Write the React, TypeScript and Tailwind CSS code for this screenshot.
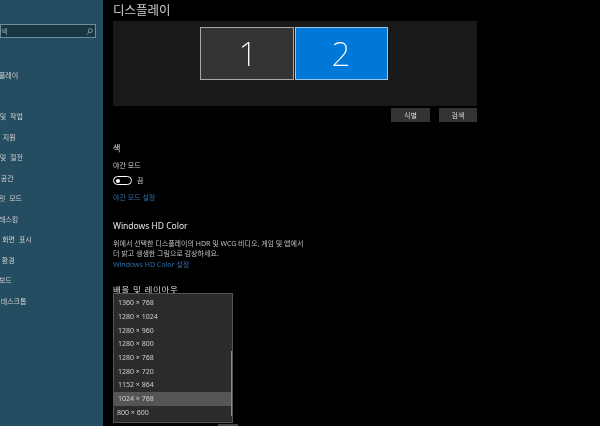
const nav = [
  { t: "디스플레이", c: "ml-[-14px] mt-[33px]" },
  { t: "알림 및 작업", c: "ml-[-17px] mt-[32px]" },
  { t: "집중 지원", c: "ml-[-14px] mt-[11.5px]" },
  { t: "전원 및 절전", c: "ml-[-17px] mt-[11.5px]" },
  { t: "저장 공간", c: "ml-[-16px] mt-[11.5px]" },
  { t: "태블릿 모드", c: "ml-[-14px] mt-[11.5px]" },
  { t: "멀티태스킹", c: "ml-[-14px] mt-[11.5px]" },
  { t: "이 PC에 화면 표시", c: "ml-[-27px] mt-[11.5px]" },
  { t: "공유 환경", c: "ml-[-15px] mt-[11.5px]" },
  { t: "클립보드", c: "ml-[-14px] mt-[11.5px]" },
  { t: "원격 데스크톱", c: "ml-[-16px] mt-[11.5px]" },
];
const res = ["1360 × 768", "1280 × 1024", "1280 × 960", "1280 × 800", "1280 × 768", "1280 × 720", "1152 × 864", "1024 × 768", "800 × 600"];

export default function App() {
  return (
    <div className="relative flex h-[426px] w-[600px] overflow-hidden bg-black text-[7px] leading-[9px] text-[#d0d0d0] antialiased [will-change:transform] [font-family:'Noto_Sans','Noto_Sans_CJK_KR',sans-serif]">
      <aside className="flex h-full w-[103px] shrink-0 flex-col overflow-hidden bg-[#244d62]">
        <div className="mt-[24px] flex h-[14px] w-[96px] items-center justify-between border border-[#6f8f9f] bg-[#1a3645] pr-[2px] text-[#9fb3bd]">
          <span>색</span>
          <svg width="7" height="7" viewBox="0 0 16 16" fill="none" stroke="#a9bbc4" strokeWidth="1.6"><circle cx="10" cy="6" r="4.5" /><path d="M7 9.5 2 15" /></svg>
        </div>
        {nav.map((n) => (
          <div key={n.t} className={`${n.c} whitespace-nowrap [word-spacing:2px]`}>{n.t}</div>
        ))}
      </aside>
      <main className="flex min-w-0 flex-1 flex-col pl-[10px]">
        <h1 className="mt-[4px] h-[17px] text-[12.5px] leading-[14px] text-[#d0d0d0]">디스플레이</h1>
        <section className="flex h-[85px] w-[364px] items-start justify-center bg-[#191919] pt-[6px]">
          <div className="ml-[-3px] flex h-[53px] w-[94px] items-center justify-center border border-[#a8a8a8] bg-[#333333] pb-[1px] pl-[3px] text-[33px] font-extralight text-white">1</div>
          <div className="ml-[1px] flex h-[53px] w-[93px] items-center justify-center border border-[#9cc7ec] bg-[#0078d7] pb-[1px] text-[33px] font-extralight text-white">2</div>
        </section>
        <div className="mt-[2px] flex w-[364px] justify-end gap-[9px]">
          <button className="h-[14px] w-[39px] bg-[#333333] text-center text-[7px] text-[#d8d8d8]">식별</button>
          <button className="h-[14px] w-[38px] bg-[#333333] text-center text-[7px] text-[#d8d8d8]">검색</button>
        </div>
        <h2 className="mt-[21px] text-[8px] leading-[10px] text-[#e4e4e4]">색</h2>
        <div className="mt-[8px]">야간 모드</div>
        <div className="mt-[6px] flex items-center gap-[5px]">
          <div className="flex h-[9px] w-[19px] items-center rounded-full border border-white pl-[2px]"><span className="h-[4px] w-[4px] rounded-full bg-white" /></div>
          <span>끔</span>
        </div>
        <a className="mt-[8px] text-[#2f6ea8]">야간 모드 설정</a>
        <h2 className="mt-[18px] text-[8.5px] leading-[11px] text-[#e8e8e8]">Windows HD Color</h2>
        <p className="mt-[8px] whitespace-nowrap leading-[10px] text-[#c0c0c0]">위에서 선택한 디스플레이의 HDR 및 WCG 비디오, 게임 및 앱에서<br />더 밝고 생생한 그림으로 감상하세요.</p>
        <a className="mt-[1px] text-[#2f6ea8]">Windows HD Color 설정</a>
        <h2 className="mt-[15px] text-[8.5px] leading-[11px] tracking-[0.7px] text-[#d8d8d8]">배율 및 레이아웃</h2>
      </main>
      <div className="absolute left-[113px] top-[293px] h-[130px] w-[120px] border border-[#555555] bg-[#2b2b2b] pt-[2px] text-[#d0d0d0]">
        {res.map((r, i) => (
          <div key={r} className={`flex h-[13.7px] items-center ${i === 8 ? "pl-[3px]" : "pl-[4px]"} ${i === 7 ? "bg-[#555555]" : ""}`}>{r}</div>
        ))}
        <div className="absolute right-0 top-[57px] h-[65px] w-[1px] bg-[#8a8a8a]" />
      </div>
      <div className="absolute left-[218px] top-[424px] h-[2px] w-[20px] bg-[#444444]" />
    </div>
  );
}
